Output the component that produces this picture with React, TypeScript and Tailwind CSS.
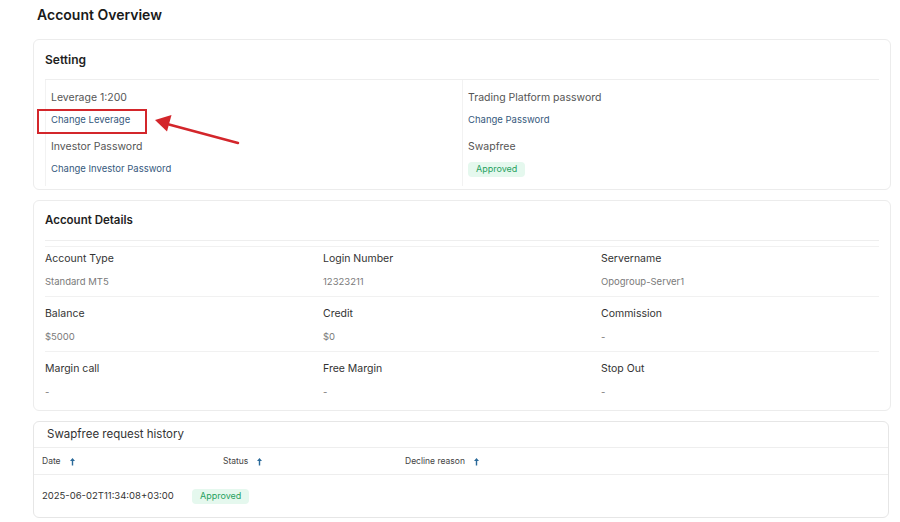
import React from 'react';

const details = [
  [
    { label: 'Account Type', value: 'Standard MT5' },
    { label: 'Login Number', value: '12323211' },
    { label: 'Servername', value: 'Opogroup-Server1' },
  ],
  [
    { label: 'Balance', value: '$5000' },
    { label: 'Credit', value: '$0' },
    { label: 'Commission', value: '-' },
  ],
  [
    { label: 'Margin call', value: '-' },
    { label: 'Free Margin', value: '-' },
    { label: 'Stop Out', value: '-' },
  ],
];

function Badge() {
  return (
    <span className="inline-flex items-center h-[15px] px-[8px] rounded-[4px] bg-[#e5f8ee] text-[#27a160] text-[9px]">
      Approved
    </span>
  );
}

function SortArrow() {
  return (
    <svg width="7" height="9" viewBox="0 0 7 9" className="ml-[8px]">
      <path d="M3.5 1 L1 4 H2.8 V8.5 H4.2 V4 H6 Z" fill="#2b6a9a" />
    </svg>
  );
}

export default function App() {
  return (
    <div
      className="w-[900px] h-[522px] overflow-hidden bg-white text-[#333]"
      style={{ fontFamily: 'Inter, "Noto Sans", sans-serif' }}
    >
      <div className="pl-[33px] pr-[9px]">
        <h1 className="pl-[4px] h-[39px] pt-[5px] text-[14px] font-semibold text-[#1a1a1a] leading-[20px]">
          Account Overview
        </h1>

        {/* Setting */}
        <div className="relative border border-[#ececec] rounded-[6px]">
          <div className="mx-[11px] h-[40px] flex items-center border-b border-[#eeeeee]">
            <h2 className="text-[12px] font-semibold text-[#1f1f1f]">Setting</h2>
          </div>
          <div className="mx-[11px] grid grid-cols-2 pb-[3px]">
            <div className="border-l border-[#f2f2f2] pl-[5px] pt-[7px] pb-[6px] flex flex-col">
              <span className="leading-[22px] text-[10.5px] text-[#555]">Leverage 1:200</span>
              <span className="leading-[22px] text-[9.5px] text-[#36597d]">Change Leverage</span>
              <span className="mt-[5px] leading-[22px] text-[10.5px] text-[#555]">Investor Password</span>
              <span className="leading-[22px] text-[9.5px] text-[#36597d]">Change Investor Password</span>
            </div>
            <div className="border-l border-[#f2f2f2] pl-[5px] pt-[7px] pb-[6px] flex flex-col">
              <span className="leading-[22px] text-[10.5px] text-[#555]">Trading Platform password</span>
              <span className="leading-[22px] text-[9.5px] text-[#36597d]">Change Password</span>
              <span className="mt-[5px] leading-[22px] text-[10.5px] text-[#555]">Swapfree</span>
              <span className="h-[22px] flex items-center">
                <Badge />
              </span>
            </div>
          </div>

          {/* annotation */}
          <div className="absolute left-[3px] top-[69px] w-[110px] h-[25px] border-2 border-[#d3262b] pointer-events-none" />
          <svg
            className="absolute left-[115px] top-[71px] pointer-events-none"
            width="130"
            height="40"
            viewBox="0 0 130 40"
          >
            <line x1="89" y1="32" x2="20" y2="13.5" stroke="#d3262b" strokeWidth="2.5" strokeLinecap="round" />
            <path d="M6 9 L22.5 4 L18 20.5 Z" fill="#d3262b" />
          </svg>
        </div>

        {/* Account Details */}
        <div className="mt-[10px] border border-[#ececec] rounded-[6px] pb-[9px]">
          <div className="mx-[11px] h-[40px] flex items-center border-b border-[#eeeeee]">
            <h2 className="text-[11.5px] font-semibold text-[#1f1f1f]">Account Details</h2>
          </div>
          <div className="mx-[11px] mt-[5px]">
            {details.map((row, i) => (
              <div
                key={i}
                className={`grid grid-cols-3 border-t border-[#f1f1f1] ${i === 0 ? 'pt-[2px]' : 'pt-[7px]'} ${i === 2 ? 'pb-0' : 'pb-[5px]'}`}
              >
                {row.map((c) => (
                  <div key={c.label} className="flex flex-col">
                    <span className="leading-[20px] text-[10.5px] text-[#333]">{c.label}</span>
                    <span className="mt-[4px] leading-[18px] text-[9.5px] text-[#7a7a7a]">{c.value}</span>
                  </div>
                ))}
              </div>
            ))}
          </div>
        </div>

        {/* Swapfree request history */}
        <div className="mt-[10px] mr-[2px] border border-[#e6e6e6] rounded-[6px]">
          <div className="h-[26px] pl-[13px] flex items-center border-b border-[#eeeeee]">
            <h2 className="text-[11.5px] text-[#333]">Swapfree request history</h2>
          </div>
          <div className="h-[27px] pl-[8px] flex items-center border-b border-[#eeeeee] text-[8.5px] text-[#444]">
            <div className="w-[181px] flex items-center">
              Date
              <SortArrow />
            </div>
            <div className="w-[182px] flex items-center">
              Status
              <SortArrow />
            </div>
            <div className="flex items-center">
              Decline reason
              <SortArrow />
            </div>
          </div>
          <div className="h-[42px] pl-[8px] flex items-center text-[9.5px] text-[#333]">
            <span className="w-[150px]">2025-06-02T11:34:08+03:00</span>
            <Badge />
          </div>
        </div>
      </div>
    </div>
  );
}
